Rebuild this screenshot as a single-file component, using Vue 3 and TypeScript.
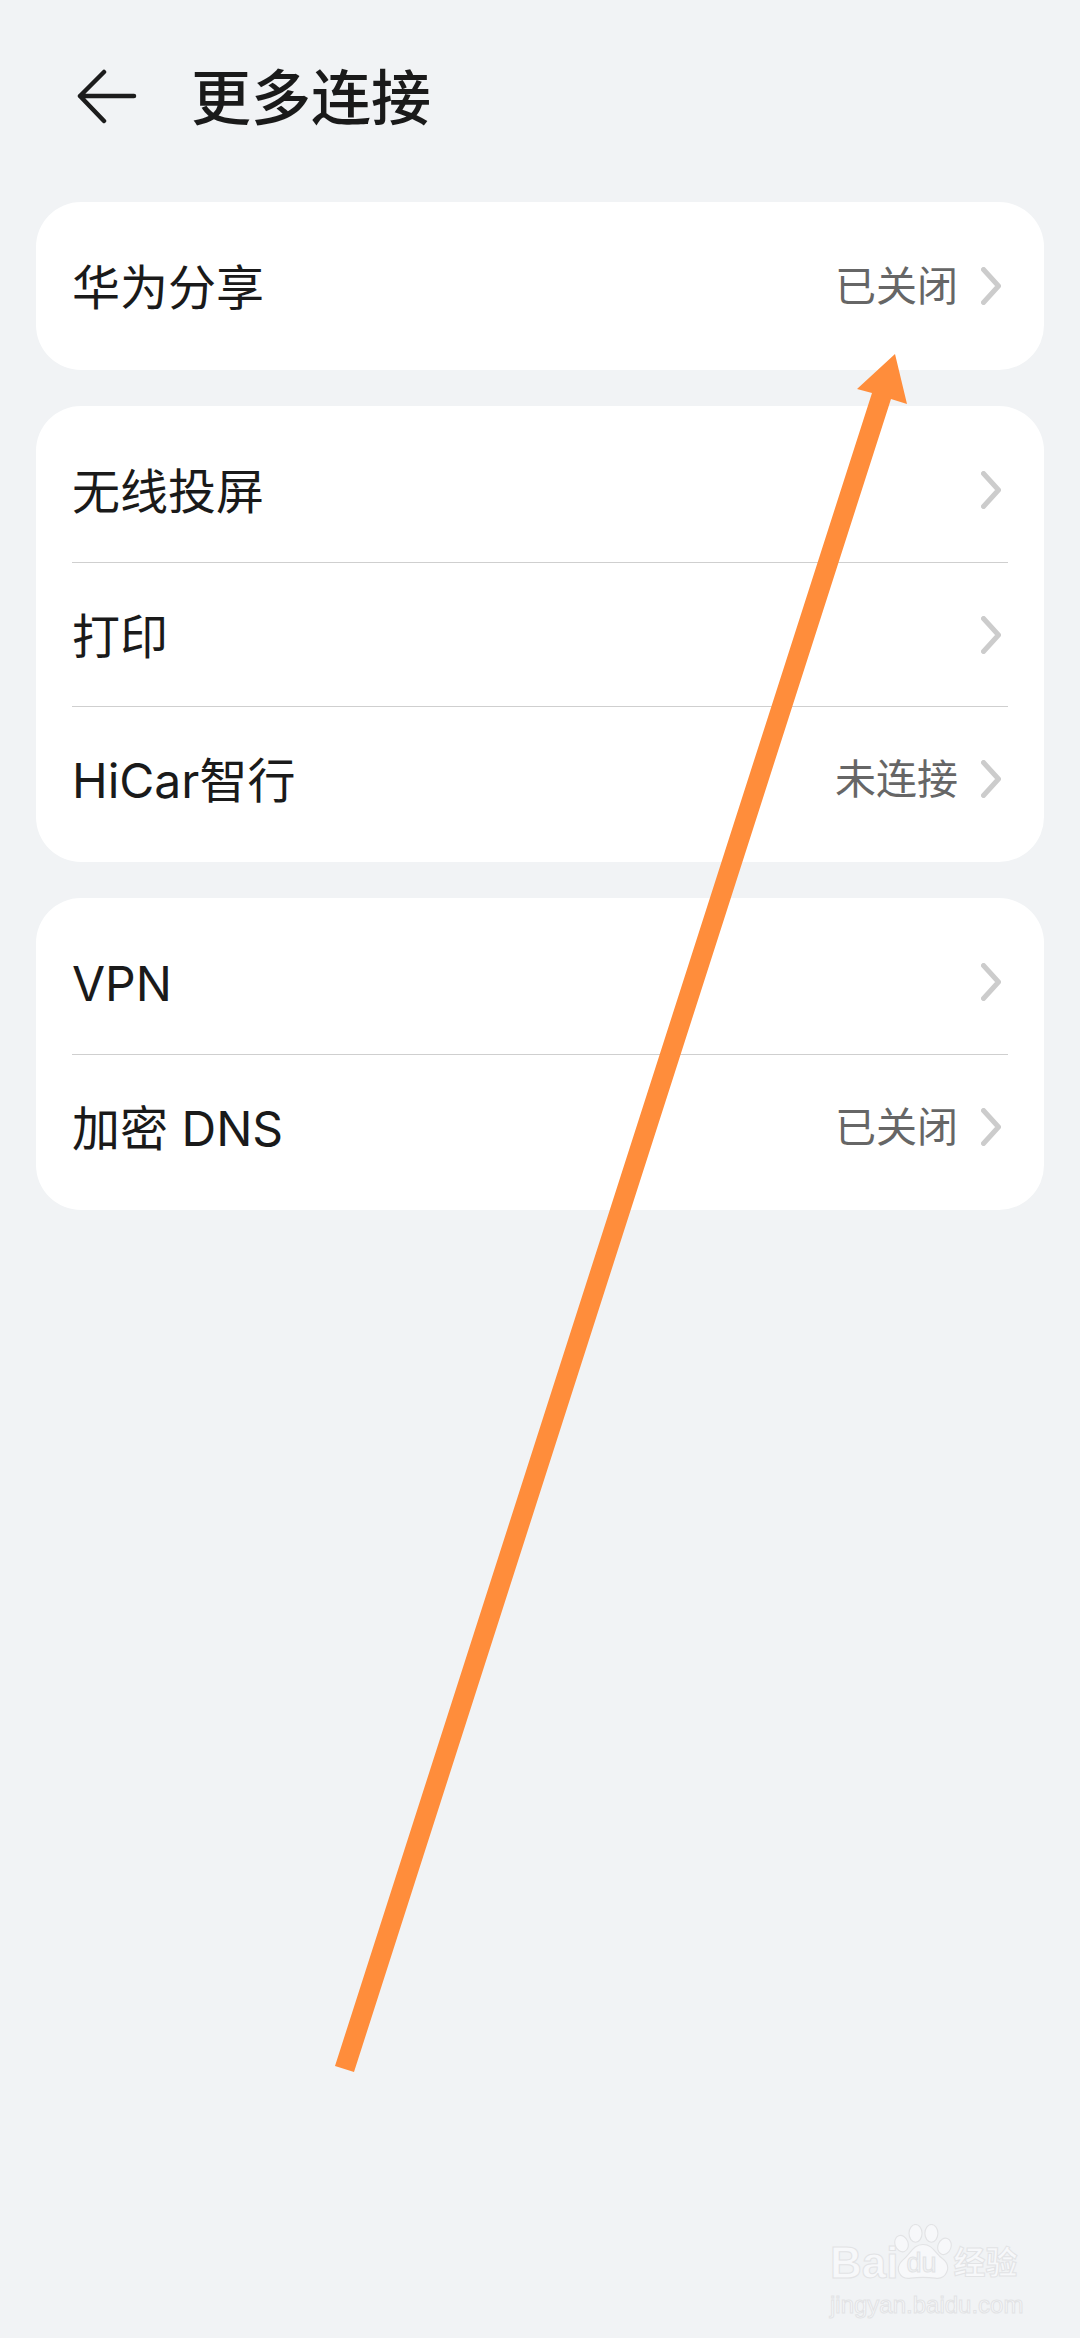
<script setup lang="ts">
interface Row {
  label: string
  value?: string
}

const groups: Row[][] = [
  [{ label: '华为分享', value: '已关闭' }],
  [
    { label: '无线投屏' },
    { label: '打印' },
    { label: 'HiCar智行', value: '未连接' }
  ],
  [{ label: 'VPN' }, { label: '加密 DNS', value: '已关闭' }]
]
</script>

<template>
  <div class="page">
    <div class="peek">网络和连接</div>

    <header class="title-bar">
      <svg class="back" width="60" height="58" viewBox="0 0 60 58" fill="none">
        <path d="M27 3 L3 27 L27 52 M3 27 H57" stroke="#1c1c1c" stroke-width="4.5" stroke-linecap="round" stroke-linejoin="round" />
      </svg>
      <h1 class="title">更多连接</h1>
    </header>

    <main class="groups">
      <section v-for="(group, i) in groups" :key="i" class="card">
        <div v-for="row in group" :key="row.label" class="row">
          <span class="label">{{ row.label }}</span>
          <span v-if="row.value" class="value">{{ row.value }}</span>
          <svg class="chevron" width="20" height="38" viewBox="0 0 20 38" fill="none">
            <path d="M2.5 2.5 L17.5 19 L2.5 35.5" stroke="#cccccc" stroke-width="5" stroke-linecap="round" stroke-linejoin="round" />
          </svg>
        </div>
      </section>
    </main>

    <!-- annotation drawn over the screenshot -->
    <svg class="arrow" width="1080" height="2338" viewBox="0 0 1080 2338">
      <polygon points="895,354 907,404 891,399 354,2072 335,2066 872,393 857,389" fill="#ff8d3b" />
    </svg>

    <div class="watermark">
      <div class="mark-top">
        <span class="mark-bai">Bai</span>
        <span class="paw">
          <svg width="58" height="56" viewBox="0 0 62 60">
            <g fill="#f7f8fa" stroke="#e2e3e5" stroke-width="1.2">
              <ellipse cx="8" cy="21" rx="7" ry="9" transform="rotate(-20 8 21)" />
              <ellipse cx="23" cy="10" rx="7" ry="9.5" />
              <ellipse cx="40" cy="10" rx="7" ry="9.5" />
              <ellipse cx="54" cy="24" rx="7" ry="9" transform="rotate(20 54 24)" />
              <path d="M31 22 C42 22 44 32 53 38 C62 46 56 60 44 58 C36 57 26 57 18 58 C6 60 0 48 9 39 C18 32 20 22 31 22 Z" />
            </g>
          </svg>
          <span class="mark-du">du</span>
        </span>
        <span class="mark-cn">经验</span>
      </div>
      <div class="mark-url">jingyan.baidu.com</div>
    </div>
  </div>
</template>

<style>
html,
body {
  margin: 0;
  background: #f1f3f5;
}
</style>

<style scoped>
.page {
  position: relative;
  width: 1080px;
  height: 2338px;
  overflow: hidden;
  background: #f1f3f5;
  color: #1a1a1a;
  font-family: "Inter", "Noto Sans CJK SC", sans-serif;
}

.peek {
  position: absolute;
  left: 84px;
  top: -30px;
  font-size: 27px;
  line-height: 32px;
  color: #b9babc;
}

.title-bar {
  display: flex;
  align-items: center;
  height: 100px;
  padding: 48px 0 0 77px;
}

.back {
  flex-shrink: 0;
}

.title {
  margin: 0 0 0 54px;
  font-size: 60px;
  line-height: 64px;
  font-weight: 500;
  color: #1a1a1a;
}

.groups {
  display: flex;
  flex-direction: column;
  gap: 36px;
  margin: 54px 36px 0;
}

.card {
  padding: 12px 0;
  border-radius: 45px;
  background: #ffffff;
}

.row {
  display: flex;
  align-items: center;
  height: 144px;
  margin: 0 36px;
  box-sizing: border-box;
}

.row + .row {
  border-top: 1px solid #cfcfcf;
}

.label {
  flex: 1;
  padding-top: 4px;
  font-size: 48px;
  line-height: 60px;
  font-weight: 400;
  color: #1a1a1a;
}

.value {
  margin-right: 23px;
  font-size: 41px;
  line-height: 52px;
  color: #666666;
}

.chevron {
  flex-shrink: 0;
  margin-right: 7px;
}

.arrow {
  position: absolute;
  left: 0;
  top: 0;
  pointer-events: none;
}

.watermark {
  position: absolute;
  left: 830px;
  top: 2222px;
  width: 200px;
  color: #f7f8fa;
  font-family: "Liberation Sans", "Noto Sans CJK SC", sans-serif;
  -webkit-text-stroke: 1px #e2e3e5;
}

.mark-top {
  display: flex;
  align-items: flex-end;
  height: 60px;
}

.mark-bai {
  font-size: 44px;
  line-height: 38px;
  font-weight: 700;
}

.paw {
  position: relative;
  width: 58px;
  height: 56px;
  margin-bottom: 2px;
  margin-left: -4px;
}

.mark-du {
  position: absolute;
  left: 12px;
  top: 26px;
  font-size: 27px;
  line-height: 27px;
  color: #f1f3f5;
}

.mark-cn {
  margin-left: 1px;
  font-size: 32px;
  line-height: 38px;
  font-weight: 700;
}

.mark-url {
  margin-top: 9px;
  font-size: 24px;
  line-height: 28px;
}
</style>
